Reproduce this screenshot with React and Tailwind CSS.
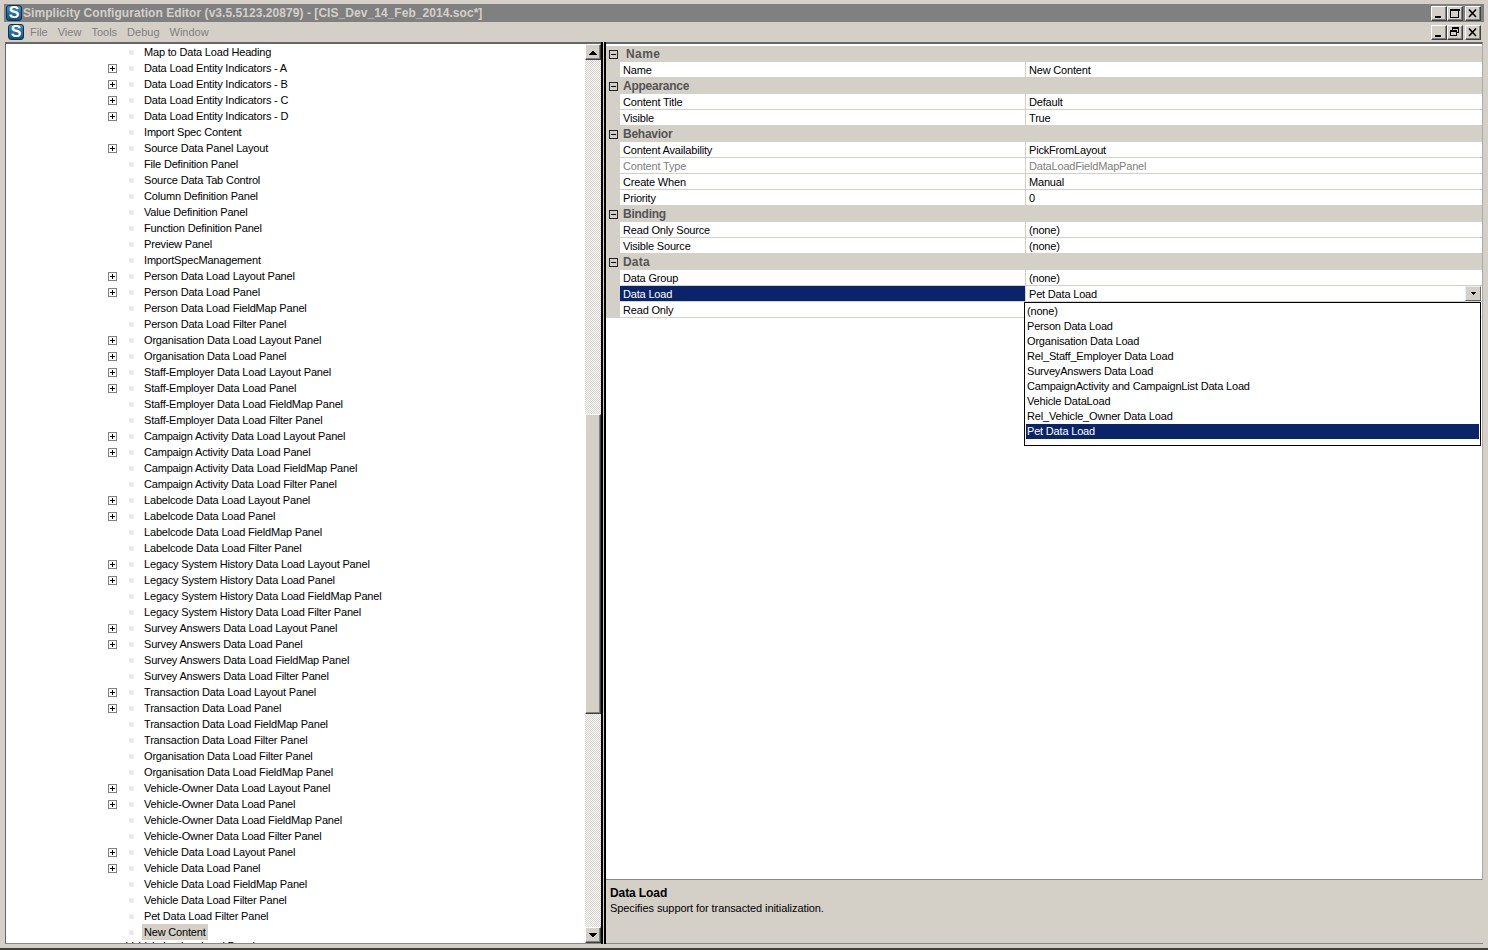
const tree = [
  ["Map to Data Load Heading", 0], ["Data Load Entity Indicators - A", 1], ["Data Load Entity Indicators - B", 1], ["Data Load Entity Indicators - C", 1], ["Data Load Entity Indicators - D", 1],
  ["Import Spec Content", 0], ["Source Data Panel Layout", 1], ["File Definition Panel", 0], ["Source Data Tab Control", 0], ["Column Definition Panel", 0], ["Value Definition Panel", 0], ["Function Definition Panel", 0], ["Preview Panel", 0], ["ImportSpecManagement", 0],
  ["Person Data Load Layout Panel", 1], ["Person Data Load Panel", 1], ["Person Data Load FieldMap Panel", 0], ["Person Data Load Filter Panel", 0],
  ["Organisation Data Load Layout Panel", 1], ["Organisation Data Load Panel", 1],
  ["Staff-Employer Data Load Layout Panel", 1], ["Staff-Employer Data Load Panel", 1], ["Staff-Employer Data Load FieldMap Panel", 0], ["Staff-Employer Data Load Filter Panel", 0],
  ["Campaign Activity Data Load Layout Panel", 1], ["Campaign Activity Data Load Panel", 1], ["Campaign Activity Data Load FieldMap Panel", 0], ["Campaign Activity Data Load Filter Panel", 0],
  ["Labelcode Data Load Layout Panel", 1], ["Labelcode Data Load Panel", 1], ["Labelcode Data Load FieldMap Panel", 0], ["Labelcode Data Load Filter Panel", 0],
  ["Legacy System History Data Load Layout Panel", 1], ["Legacy System History Data Load Panel", 1], ["Legacy System History Data Load FieldMap Panel", 0], ["Legacy System History Data Load Filter Panel", 0],
  ["Survey Answers Data Load Layout Panel", 1], ["Survey Answers Data Load Panel", 1], ["Survey Answers Data Load FieldMap Panel", 0], ["Survey Answers Data Load Filter Panel", 0],
  ["Transaction Data Load Layout Panel", 1], ["Transaction Data Load Panel", 1], ["Transaction Data Load FieldMap Panel", 0], ["Transaction Data Load Filter Panel", 0],
  ["Organisation Data Load Filter Panel", 0], ["Organisation Data Load FieldMap Panel", 0],
  ["Vehicle-Owner Data Load Layout Panel", 1], ["Vehicle-Owner Data Load Panel", 1], ["Vehicle-Owner Data Load FieldMap Panel", 0], ["Vehicle-Owner Data Load Filter Panel", 0],
  ["Vehicle Data Load Layout Panel", 1], ["Vehicle Data Load Panel", 1], ["Vehicle Data Load FieldMap Panel", 0], ["Vehicle Data Load Filter Panel", 0],
  ["Pet Data Load Filter Panel", 0],
];

const grid = [
  ["c", "Name", "ml-[6px] tracking-[0.4px]"], ["r", "Name", "New Content"],
  ["c", "Appearance", "ml-[3px] tracking-[-0.25px]"], ["r", "Content Title", "Default"], ["r", "Visible", "True"],
  ["c", "Behavior", "ml-[3px] tracking-[-0.25px]"], ["r", "Content Availability", "PickFromLayout"], ["d", "Content Type", "DataLoadFieldMapPanel"], ["r", "Create When", "Manual"], ["r", "Priority", "0"],
  ["c", "Binding", "ml-[3px] tracking-[-0.25px]"], ["r", "Read Only Source", "(none)"], ["r", "Visible Source", "(none)"],
  ["c", "Data", "ml-[3px] tracking-[0.2px]"], ["r", "Data Group", "(none)"], ["s", "Data Load", "Pet Data Load"], ["r", "Read Only", ""],
];

const options = ["(none)", "Person Data Load", "Organisation Data Load", "Rel_Staff_Employer Data Load", "SurveyAnswers Data Load", "CampaignActivity and CampaignList Data Load", "Vehicle DataLoad", "Rel_Vehicle_Owner Data Load", "Pet Data Load"];

const bevel = "border border-t-white border-l-white border-r-[#404040] border-b-[#404040] bg-[#d4d0c8] shadow-[inset_-1px_-1px_0_#808080]";

function Logo({ className }) {
  return (
    <div className={`flex h-[16px] w-[16px] shrink-0 items-center justify-center rounded-[3px] border border-[#12304c] bg-linear-to-b from-[#3d8ec8] to-[#0f4f82] text-[16px] font-bold leading-none tracking-normal text-white ${className}`}>
      S
    </div>
  );
}

function WinBtn({ kind, className = "" }) {
  return (
    <div className={`flex h-[15px] w-[16px] items-center justify-center ${bevel} ${className}`}>
      <svg width="12" height="11" viewBox="0 0 12 11" shapeRendering="crispEdges">
        {kind === "min" && <rect x="2" y="8" width="6" height="2" fill="#000" />}
        {kind === "max" && <path d="M1.5 1.5h8v8h-8zM1 1h9v1.5H1z" fill="none" stroke="#000" />}
        {kind === "close" && <path d="M2 1.5l7 7.5M9 1.5l-7 7.5" stroke="#000" strokeWidth="1.6" shapeRendering="auto" />}
        {kind === "restore" && (
          <>
            <rect x="3.5" y="0.5" width="6" height="5" fill="#d4d0c8" stroke="#000" />
            <rect x="3" y="0" width="7" height="2" fill="#000" />
            <rect x="1.5" y="3.5" width="6" height="5" fill="#d4d0c8" stroke="#000" />
            <rect x="1" y="3" width="7" height="2" fill="#000" />
          </>
        )}
      </svg>
    </div>
  );
}

function PlusBox({ minus }) {
  return (
    <svg width="9" height="9" viewBox="0 0 9 9" shapeRendering="crispEdges" className="shrink-0">
      <rect x="0.5" y="0.5" width="8" height="8" fill={minus ? "#d4d0c8" : "#fff"} stroke={minus ? "#222" : "#808080"} />
      <rect x="2" y="4" width="5" height="1" fill="#000" />
      {!minus && <rect x="4" y="2" width="1" height="5" fill="#000" />}
    </svg>
  );
}

function TreeRow({ label, plus, selected }) {
  return (
    <div className="flex h-4 shrink-0 items-center">
      <div className="ml-[101px] flex w-[11px] items-center justify-center">{plus ? <PlusBox /> : null}</div>
      <div className="ml-[11px] h-[5px] w-[5px] rounded-full bg-[#ebe6ec]" />
      <div className={`ml-[8px] flex h-4 items-center whitespace-nowrap px-[2px] ${selected ? "bg-[#d4d0c8]" : ""}`}>{label}</div>
    </div>
  );
}

function ScrollArrow({ up }) {
  return (
    <div className={`flex h-[16px] w-[16px] shrink-0 items-center justify-center ${bevel}`}>
      <svg width="8" height="5" viewBox="0 0 8 5" shapeRendering="crispEdges">
        <path d={up ? "M4 0l4 5H0z" : "M0 0h8L4 5z"} fill="#000" />
      </svg>
    </div>
  );
}

function GridRow({ row }) {
  const [t, a, b] = row;
  if (t === "c") {
    return (
      <div className="flex h-4 items-center bg-[#d4d0c8]">
        <div className="ml-[3px] flex w-[11px] items-center"><PlusBox minus /></div>
        <div className={`text-[12px] font-bold text-[#555] ${b}`}>{a}</div>
      </div>
    );
  }
  const sel = t === "s";
  return (
    <div className="flex h-4 bg-[#d4d0c8]">
      <div className="w-[14px] shrink-0" />
      <div className={`flex w-[405px] shrink-0 items-center border-b border-[#d4d0c8] pt-[2px] pl-[3px] ${sel ? "bg-[#0a246a] text-white" : "bg-white"} ${t === "d" ? "text-[#808080]" : ""}`}>{a}</div>
      <div className="w-px shrink-0 bg-[#d4d0c8]" />
      <div className={`relative flex flex-1 items-center border-b border-[#d4d0c8] bg-white pt-[2px] pl-[3px] ${t === "d" ? "text-[#808080]" : ""}`}>
        <span>{b}</span>
        {sel && (
          <div className="absolute top-0 right-px flex h-[15px] w-[16px] items-center justify-center border border-t-[#eee] border-r-[#666] border-b-[#666] border-l-[#eee] bg-[#d4d0c8]">
            <svg width="5" height="3" viewBox="0 0 5 3" shapeRendering="crispEdges"><path d="M0 0h5L2.5 3z" fill="#000" /></svg>
          </div>
        )}
      </div>
    </div>
  );
}

export default function App() {
  return (
    <div className="flex h-[950px] w-[1488px] flex-col overflow-hidden bg-[#d4d0c8] pt-[4px] font-['Liberation_Sans',sans-serif] text-[11px] leading-none tracking-[-0.18px] text-black">
      <div className="mx-[4px] flex h-[18px] shrink-0 items-center bg-[#808080] pr-[3px]">
        <Logo className="ml-[2px]" />
        <div className="ml-[1px] whitespace-nowrap text-[12px] font-bold tracking-[0.05px] text-[#d4d0c8]">Simplicity Configuration Editor (v3.5.5123.20879) - [CIS_Dev_14_Feb_2014.soc*]</div>
        <div className="flex-1" />
        <WinBtn kind="min" /><WinBtn kind="max" /><WinBtn kind="close" className="ml-[2px]" />
      </div>
      <div className="mx-[4px] flex h-[20px] shrink-0 items-center pr-[3px]">
        <Logo className="ml-[4px]" />
        <div className="ml-[6px] flex gap-[10px] tracking-normal text-[#808080]">
          <span>File</span><span>View</span><span>Tools</span><span>Debug</span><span>Window</span>
        </div>
        <div className="flex-1" />
        <WinBtn kind="min" /><WinBtn kind="restore" /><WinBtn kind="close" className="ml-[2px]" />
      </div>
      <div className="flex h-[902px] shrink-0 px-[5px]">
        <div className="flex w-[596px] shrink-0 border-t-2 border-b border-l border-t-[#666] border-b-[#888] border-l-[#666] bg-white">
          <div className="flex h-full flex-1 flex-col overflow-hidden">
            {tree.map(([l, p]) => <TreeRow key={l} label={l} plus={p} />)}
            <TreeRow label="New Content" selected />
            <div className="ml-[120px] flex h-4 shrink-0 items-start whitespace-nowrap pt-px">Vehicle Lookup Load Panel</div>
          </div>
          <div className="flex h-full w-[16px] shrink-0 flex-col">
            <ScrollArrow up />
            <div className="h-[354px] bg-[repeating-conic-gradient(#d4d0c8_0_25%,#fff_0_50%)] bg-[length:2px_2px]" />
            <div className={`h-[300px] w-[16px] ${bevel}`} />
            <div className="flex-1 bg-[repeating-conic-gradient(#d4d0c8_0_25%,#fff_0_50%)] bg-[length:2px_2px]" />
            <ScrollArrow />
          </div>
        </div>
        <div className="flex w-[5px] shrink-0">
          <div className="w-[2px] bg-black" />
          <div className="w-px bg-[#d4d0c8]" />
          <div className="w-[2px] bg-black" />
        </div>
        <div className="relative flex min-w-0 flex-1 flex-col">
          <div className="flex h-[838px] flex-col border-t-2 border-r border-b border-t-[#666] border-r-[#aaa] border-b-[#888] bg-white pt-[2px]">
            {grid.map((r, i) => <GridRow key={i} row={r} />)}
          </div>
          <div className="flex-1 border-b border-[#888] pt-[7px] pl-[4px]">
            <div className="text-[12px] font-bold tracking-[-0.1px]">Data Load</div>
            <div className="mt-[4px] tracking-[-0.08px]">Specifies support for transacted initialization.</div>
          </div>
          <div className="absolute top-[260px] left-[418px] flex w-[457px] flex-col border border-black bg-white px-px pt-px">
            {options.map((o, i) => (
              <div key={o} className={`flex h-[15px] items-center pl-px ${i === 8 ? "bg-[#0a246a] text-white" : ""}`}>{o}</div>
            ))}
            <div className="h-[6px]" />
          </div>
        </div>
      </div>
      <div className="flex-1" />
      <div className="h-[2px] shrink-0 bg-[#404040]" />
    </div>
  );
}
